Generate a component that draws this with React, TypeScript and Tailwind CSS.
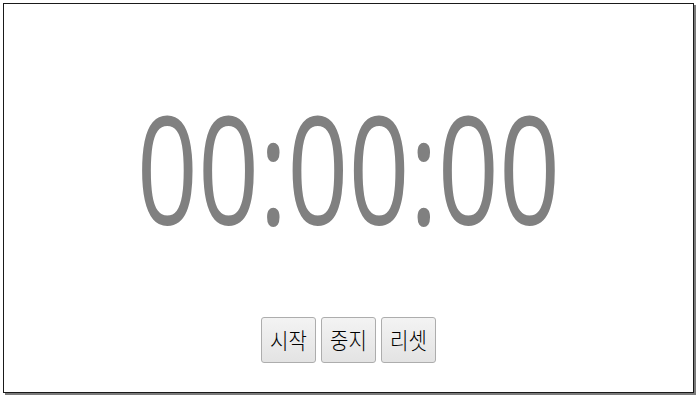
import React from "react";

export default function App() {
  const btn =
    "h-[46px] w-[55px] rounded-[3px] border border-[#adadad] bg-gradient-to-b from-[#f3f3f3] to-[#e3e3e3] text-[20px] font-light leading-none text-black flex items-center justify-center";
  return (
    <div className="w-[700px] h-[400px] bg-white p-[3px]" style={{ fontFamily: '"Noto Sans CJK KR", sans-serif' }}>
      <div className="w-[691px] h-[390px] border border-[#1a1a1a] shadow-[2px_2px_0_#7a7a7a] flex flex-col items-center">
        <div
          className="mt-[109px] h-[107px] leading-none text-[107px] text-[#808080] scale-y-[1.41] whitespace-nowrap"
          style={{ fontFamily: '"Open Sans", sans-serif' }}
        >
          00:00:00
        </div>
        <div className="mt-[97px] flex gap-[5px]">
          <button className={btn}><span className="scale-y-[1.12]">시작</span></button>
          <button className={btn}><span className="scale-y-[1.12]">중지</span></button>
          <button className={btn}><span className="scale-y-[1.12]">리셋</span></button>
        </div>
      </div>
    </div>
  );
}
